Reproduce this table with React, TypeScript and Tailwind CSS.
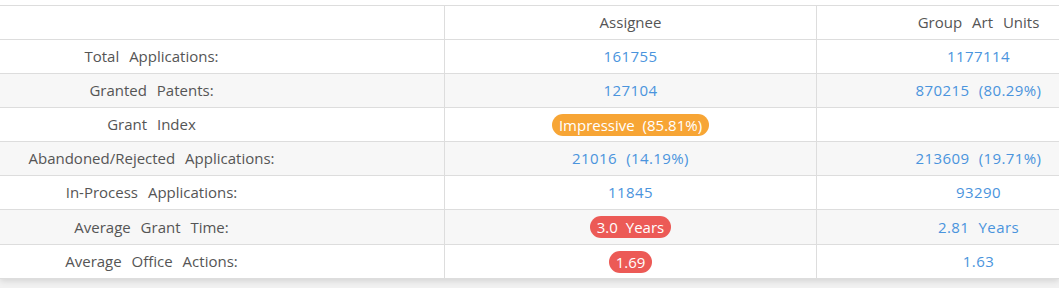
import React from "react";

type Cell = { text: string; badge?: "orange" | "red" } | null;

const rows: { label: string; a: Cell; b: Cell; h: string }[] = [
  { label: "Total Applications:", a: { text: "161755" }, b: { text: "1177114" }, h: "h-[34px]" },
  { label: "Granted Patents:", a: { text: "127104" }, b: { text: "870215 (80.29%)" }, h: "h-[34px]" },
  { label: "Grant Index", a: { text: "Impressive (85.81%)", badge: "orange" }, b: null, h: "h-[34px]" },
  { label: "Abandoned/Rejected Applications:", a: { text: "21016 (14.19%)" }, b: { text: "213609 (19.71%)" }, h: "h-[34px]" },
  { label: "In-Process Applications:", a: { text: "11845" }, b: { text: "93290" }, h: "h-[34px]" },
  { label: "Average Grant Time:", a: { text: "3.0 Years", badge: "red" }, b: { text: "2.81 Years" }, h: "h-[35px]" },
  { label: "Average Office Actions:", a: { text: "1.69", badge: "red" }, b: { text: "1.63" }, h: "h-[34px]" },
];

function Value({ c }: { c: Cell }) {
  if (!c) return null;
  if (c.badge === "orange")
    return (
      <span className="inline-block rounded-full bg-[#f7a535] px-[7px] leading-[22px] text-white [word-spacing:4px]">{c.text}</span>
    );
  if (c.badge === "red")
    return (
      <span className="inline-block rounded-full bg-[#ec5a56] px-[7px] leading-[22px] text-white [word-spacing:4px]">{c.text}</span>
    );
  return <span className="text-[#4a94dd] tracking-[0.4px] [word-spacing:5px]">{c.text}</span>;
}

export default function App() {
  return (
    <div className="w-[1059px] h-[288px] overflow-hidden bg-[#f1f1f1] font-['Open_Sans',sans-serif] text-[15px] [word-spacing:6px]">
      <div className="bg-white pt-[5px] shadow-[0_2px_6px_rgba(0,0,0,0.12)]">
        <div className="w-[1140px]">
          <div className="grid grid-cols-[445px_372px_323px] h-[34px] border-t border-[#dddddd] items-center">
            <div className="h-full border-r border-[#dddddd]" />
            <div className="h-full flex items-center justify-center border-r border-[#dddddd] text-[#555555]">Assignee</div>
            <div className="h-full flex items-center justify-center text-[#555555]">Group Art Units</div>
          </div>
          {rows.map((r, i) => (
            <div
              key={r.label}
              className={`grid grid-cols-[445px_372px_323px] ${r.h} border-t border-[#dddddd] ${i % 2 === 1 ? "bg-[#f7f7f7]" : "bg-white"}`}
            >
              <div className="flex items-center justify-center pr-[141px] border-r border-[#dddddd] text-[#555555]">{r.label}</div>
              <div className="flex items-center justify-center border-r border-[#dddddd]"><Value c={r.a} /></div>
              <div className="flex items-center justify-center"><Value c={r.b} /></div>
            </div>
          ))}
          <div className="border-t border-[#dddddd]" />
        </div>
      </div>
    </div>
  );
}
